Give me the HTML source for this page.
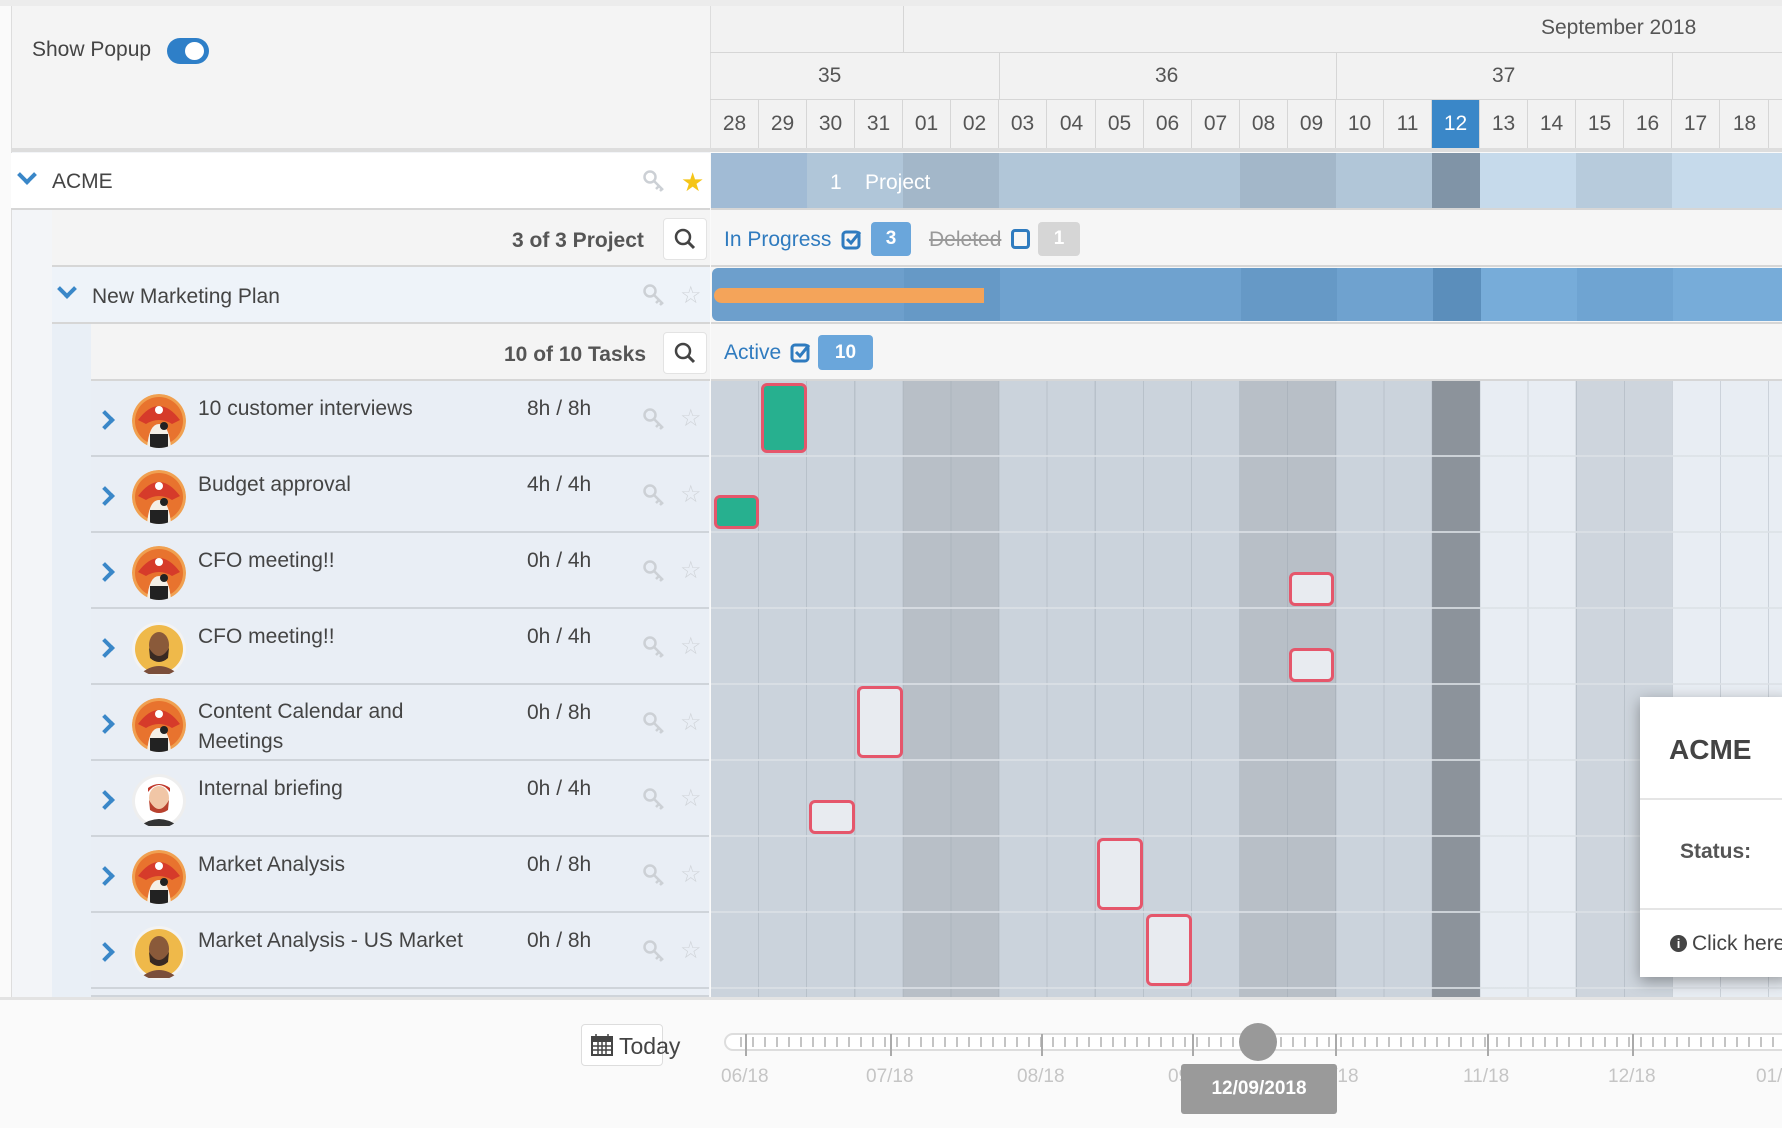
<!DOCTYPE html>
<html><head><meta charset="utf-8"><style>
*{box-sizing:border-box;margin:0;padding:0}
body{width:1782px;height:1128px;overflow:hidden;background:#fafafa;font-family:"Liberation Sans",sans-serif;color:#444;position:relative}
.a{position:absolute}
.t{font-size:21px;color:#444;white-space:nowrap}
.day{position:absolute;top:100px;height:48px;width:48px;border-right:1px solid #d6d6d6;text-align:center;line-height:48px;font-size:21px;color:#555}
.key{position:absolute;width:22px;height:22px}
.star{position:absolute;font-size:24px;color:#d0d4d9;line-height:24px}
.bar{position:absolute;border:3px solid #e5566b;border-radius:6px;background:#e8ebf0}
.av{position:absolute;width:54px;height:54px;border-radius:50%;overflow:hidden}
.chev{position:absolute;width:14px;height:14px;border-right:4px solid #3a87c8;border-bottom:4px solid #3a87c8}
.row{position:absolute;left:91px;width:618px;height:76px;background:#e9eef5;border-bottom:2px solid #cfd4da}
</style></head><body>
<!-- top strip -->
<div class="a" style="left:0;top:0;width:1782px;height:6px;background:#ececec"></div>
<!-- left header -->
<div class="a" style="left:11px;top:6px;width:699px;height:146px;background:#f4f4f4;border-left:1px solid #ddd;border-bottom:4px solid #ddd"></div>
<div class="a t" style="left:32px;top:38px">Show Popup</div>
<div class="a" style="left:167px;top:38px;width:42px;height:26px;border-radius:13px;background:#2e7fc8"></div>
<div class="a" style="left:185px;top:42px;width:19px;height:18px;border-radius:50%;background:#fff"></div>

<!-- right header -->
<div class="a" style="left:710px;top:6px;width:1072px;height:146px;background:#f2f2f2;border-left:1px solid #ddd"></div>
<div class="a" style="left:710px;top:52px;width:1072px;height:1px;background:#d6d6d6"></div>
<div class="a" style="left:710px;top:99px;width:1072px;height:1px;background:#d6d6d6"></div>
<div class="a" style="left:710px;top:148px;width:1072px;height:4px;background:#ddd"></div>
<div class="a" style="left:903px;top:6px;width:1px;height:46px;background:#d6d6d6"></div>
<div class="a t" style="left:1541px;top:16px;color:#555">September 2018</div>
<div class="a" style="left:999px;top:52px;width:1px;height:48px;background:#d6d6d6"></div>
<div class="a" style="left:1336px;top:52px;width:1px;height:48px;background:#d6d6d6"></div>
<div class="a" style="left:1672px;top:52px;width:1px;height:48px;background:#d6d6d6"></div>
<div class="a t" style="left:818px;top:64px;color:#555">35</div>
<div class="a t" style="left:1155px;top:64px;color:#555">36</div>
<div class="a t" style="left:1492px;top:64px;color:#555">37</div>
<div class="day" style="left:711px">28</div><div class="day" style="left:759px">29</div><div class="day" style="left:807px">30</div><div class="day" style="left:855px">31</div><div class="day" style="left:903px">01</div><div class="day" style="left:951px">02</div><div class="day" style="left:999px">03</div><div class="day" style="left:1048px">04</div><div class="day" style="left:1096px">05</div><div class="day" style="left:1144px">06</div><div class="day" style="left:1192px">07</div><div class="day" style="left:1240px">08</div><div class="day" style="left:1288px">09</div><div class="day" style="left:1336px">10</div><div class="day" style="left:1384px">11</div><div class="day" style="left:1432px;background:#3a87c8;color:#fff">12</div><div class="day" style="left:1480px">13</div><div class="day" style="left:1528px">14</div><div class="day" style="left:1576px">15</div><div class="day" style="left:1624px">16</div><div class="day" style="left:1672px">17</div><div class="day" style="left:1721px">18</div><div class="day" style="left:1769px">19</div>

<!-- left body -->
<div class="a" style="left:11px;top:152px;width:699px;height:845px;background:#f3f5f8;border-left:1px solid #ddd"></div>
<div class="a" style="left:52px;top:267px;width:39px;height:730px;background:#e9eff6"></div>
<!-- ACME row -->
<div class="a" style="left:11px;top:153px;width:699px;height:57px;background:#fff;border-bottom:2px solid #d6d6d6"></div>
<div class="chev" style="left:20px;top:168px;transform:rotate(45deg)"></div>
<div class="a t" style="left:52px;top:170px">ACME</div>
<div class="a" style="left:681px;top:167px;font-size:26px;color:#f5c518">★</div>
<!-- project filter row -->
<div class="a" style="left:52px;top:210px;width:658px;height:57px;background:#f4f4f4;border-bottom:2px solid #d6d6d6"></div>
<div class="a t" style="left:512px;top:229px;font-weight:bold;color:#555">3 of 3 Project</div>
<div class="a" style="left:663px;top:218px;width:44px;height:42px;background:#fff;border-radius:4px;border:1px solid #e3e3e3"></div>
<svg class="a" style="left:673px;top:227px" width="24" height="24"><circle cx="10" cy="10" r="7" fill="none" stroke="#444" stroke-width="2.5"/><line x1="15" y1="15" x2="21" y2="21" stroke="#444" stroke-width="3"/></svg>
<!-- marketing plan row -->
<div class="a" style="left:52px;top:267px;width:658px;height:57px;background:#eef3f9;border-bottom:2px solid #d6d6d6"></div>
<div class="chev" style="left:60px;top:282px;transform:rotate(45deg)"></div>
<div class="a t" style="left:92px;top:285px">New Marketing Plan</div>
<!-- tasks filter -->
<div class="a" style="left:91px;top:324px;width:619px;height:57px;background:#f4f4f4;border-bottom:2px solid #d6d6d6"></div>
<div class="a t" style="left:504px;top:343px;font-weight:bold;color:#555">10 of 10 Tasks</div>
<div class="a" style="left:663px;top:332px;width:44px;height:42px;background:#fff;border-radius:4px;border:1px solid #e3e3e3"></div>
<svg class="a" style="left:673px;top:341px" width="24" height="24"><circle cx="10" cy="10" r="7" fill="none" stroke="#444" stroke-width="2.5"/><line x1="15" y1="15" x2="21" y2="21" stroke="#444" stroke-width="3"/></svg>

<!-- task rows -->
<div class="row" style="top:381px"></div><div class="row" style="top:457px"></div><div class="row" style="top:533px"></div><div class="row" style="top:609px"></div><div class="row" style="top:685px"></div><div class="row" style="top:761px"></div><div class="row" style="top:837px"></div><div class="row" style="top:913px"></div><div class="row" style="top:989px;height:8px"></div>

<div class="a t" style="left:198px;top:397px">10 customer interviews</div><div class="a t" style="left:527px;top:397px">8h / 8h</div>
<div class="a t" style="left:198px;top:473px">Budget approval</div><div class="a t" style="left:527px;top:473px">4h / 4h</div>
<div class="a t" style="left:198px;top:549px">CFO meeting!!</div><div class="a t" style="left:527px;top:549px">0h / 4h</div>
<div class="a t" style="left:198px;top:625px">CFO meeting!!</div><div class="a t" style="left:527px;top:625px">0h / 4h</div>
<div class="a t" style="left:198px;top:701px;line-height:30px;margin-top:-4px">Content Calendar and<br>Meetings</div><div class="a t" style="left:527px;top:701px">0h / 8h</div>
<div class="a t" style="left:198px;top:777px">Internal briefing</div><div class="a t" style="left:527px;top:777px">0h / 4h</div>
<div class="a t" style="left:198px;top:853px">Market Analysis</div><div class="a t" style="left:527px;top:853px">0h / 8h</div>
<div class="a t" style="left:198px;top:929px">Market Analysis - US Market</div><div class="a t" style="left:527px;top:929px">0h / 8h</div>

<!-- chevrons right -->
<div class="chev" style="left:98px;top:413px;transform:rotate(-45deg)"></div>
<div class="chev" style="left:98px;top:489px;transform:rotate(-45deg)"></div>
<div class="chev" style="left:98px;top:565px;transform:rotate(-45deg)"></div>
<div class="chev" style="left:98px;top:641px;transform:rotate(-45deg)"></div>
<div class="chev" style="left:98px;top:717px;transform:rotate(-45deg)"></div>
<div class="chev" style="left:98px;top:793px;transform:rotate(-45deg)"></div>
<div class="chev" style="left:98px;top:869px;transform:rotate(-45deg)"></div>
<div class="chev" style="left:98px;top:945px;transform:rotate(-45deg)"></div>

<!-- avatars -->
<svg width="0" height="0" style="position:absolute"><defs>
<g id="pir"><circle cx="27" cy="27" r="27" fill="#f0a050"/><circle cx="27" cy="27" r="24" fill="#e8732e"/><path d="M6 26 Q27 -2 48 26 L40 30 Q27 22 14 30Z" fill="#d63b2a"/><circle cx="27" cy="16" r="4" fill="#fff"/><path d="M15 54 Q17 30 27 30 Q37 30 39 54Z" fill="#f4efe6"/><rect x="18" y="40" width="18" height="14" fill="#222"/><circle cx="32" cy="32" r="4" fill="#222"/></g>
<g id="man"><circle cx="27" cy="27" r="27" fill="#f3f3f3"/><circle cx="27" cy="27" r="24" fill="#efb94a"/><ellipse cx="27" cy="23" rx="10" ry="13" fill="#8a5a3a"/><path d="M17 26 Q27 42 37 26 L36 36 Q27 44 18 36Z" fill="#3a2a22"/><path d="M8 52 Q27 36 46 52Z" fill="#7b4e3a"/></g>
<g id="red"><circle cx="27" cy="27" r="27" fill="#eee"/><circle cx="27" cy="27" r="24" fill="#fff"/><ellipse cx="27" cy="24" rx="10" ry="12" fill="#f1c6a6"/><path d="M16 18 Q27 4 38 18 L38 14 Q27 6 16 14Z" fill="#c0392b"/><path d="M17 26 Q27 44 37 26 L36 36 Q27 42 18 36Z" fill="#b8412e"/><path d="M8 52 Q27 38 46 52Z" fill="#333"/></g>
</defs></svg>
<svg class="av" style="left:132px;top:394px" width="54" height="54"><use href="#pir"/></svg>
<svg class="av" style="left:132px;top:470px" width="54" height="54"><use href="#pir"/></svg>
<svg class="av" style="left:132px;top:546px" width="54" height="54"><use href="#pir"/></svg>
<svg class="av" style="left:132px;top:622px" width="54" height="54"><use href="#man"/></svg>
<svg class="av" style="left:132px;top:698px" width="54" height="54"><use href="#pir"/></svg>
<svg class="av" style="left:132px;top:774px" width="54" height="54"><use href="#red"/></svg>
<svg class="av" style="left:132px;top:850px" width="54" height="54"><use href="#pir"/></svg>
<svg class="av" style="left:132px;top:926px" width="54" height="54"><use href="#man"/></svg>

<!-- key + star icons -->
<svg width="0" height="0" style="position:absolute"><defs><g id="k"><circle cx="7" cy="7" r="5.5" fill="none" stroke="#ccd0d5" stroke-width="2.5"/><path d="M11 11 L20 20 M16 16 L13 19 M19 19 L17 21" stroke="#ccd0d5" stroke-width="2.5" fill="none"/></g></defs></svg>
<svg class="key" style="left:643px;top:170px"><use href="#k"/></svg>
<svg class="key" style="left:643px;top:284px"><use href="#k"/></svg><div class="star" style="left:680px;top:284px">☆</div>
<svg class="key" style="left:643px;top:408px"><use href="#k"/></svg><div class="star" style="left:680px;top:407px">☆</div>
<svg class="key" style="left:643px;top:484px"><use href="#k"/></svg><div class="star" style="left:680px;top:483px">☆</div>
<svg class="key" style="left:643px;top:560px"><use href="#k"/></svg><div class="star" style="left:680px;top:559px">☆</div>
<svg class="key" style="left:643px;top:636px"><use href="#k"/></svg><div class="star" style="left:680px;top:635px">☆</div>
<svg class="key" style="left:643px;top:712px"><use href="#k"/></svg><div class="star" style="left:680px;top:711px">☆</div>
<svg class="key" style="left:643px;top:788px"><use href="#k"/></svg><div class="star" style="left:680px;top:787px">☆</div>
<svg class="key" style="left:643px;top:864px"><use href="#k"/></svg><div class="star" style="left:680px;top:863px">☆</div>
<svg class="key" style="left:643px;top:940px"><use href="#k"/></svg><div class="star" style="left:680px;top:939px">☆</div>

<!-- gantt ACME row -->
<div class="a" style="left:711px;top:153px;width:1071px;height:57px;border-bottom:2px solid #d6d6d6;background:linear-gradient(to right,#a1bbd5 0 96px,#afc4d7 96px 192px,#a3b7c9 192px 288px,#b1c6d8 288px 529px,#a3b7c9 529px 625px,#b1c6d8 625px 721px,#8094a7 721px 769px,#c6daeb 769px 865px,#b7cbdc 865px 961px,#c6daeb 961px)"></div>
<div class="a" style="left:807px;top:153px;width:96px;height:55px;background:#b0c6d9;border-radius:4px 0 0 4px"></div>
<div class="a t" style="left:830px;top:171px;color:#fff">1</div>
<div class="a t" style="left:865px;top:171px;color:#fff">Project</div>
<!-- status filter row -->
<div class="a" style="left:711px;top:210px;width:1071px;height:57px;background:#f6f6f6;border-bottom:2px solid #d6d6d6"></div>
<div class="a t" style="left:724px;top:228px;color:#2f7bbf">In Progress</div>
<svg class="a" style="left:841px;top:229px" width="22" height="22"><rect x="2" y="3" width="16" height="16" rx="3" fill="none" stroke="#2f7bbf" stroke-width="3"/><path d="M6 10 L10 14 L19 3" stroke="#2f7bbf" stroke-width="3" fill="none"/></svg>
<div class="a" style="left:871px;top:222px;width:40px;height:34px;background:#6aa6db;border-radius:4px;color:#fff;font-weight:bold;font-size:19px;text-align:center;line-height:34px">3</div>
<div class="a t" style="left:929px;top:228px;color:#999;text-decoration:line-through">Deleted</div>
<div class="a" style="left:1011px;top:229px;width:19px;height:20px;border:3px solid #2f7bbf;border-radius:4px"></div>
<div class="a" style="left:1038px;top:222px;width:42px;height:34px;background:#d6d6d6;border-radius:4px;color:#fff;font-weight:bold;font-size:19px;text-align:center;line-height:34px">1</div>
<!-- marketing gantt row -->
<div class="a" style="left:711px;top:267px;width:1071px;height:57px;background:#f6f6f6;border-bottom:2px solid #d6d6d6"></div>
<div class="a" style="left:712px;top:268px;width:1070px;height:53px;border-radius:6px 0 0 6px;background:linear-gradient(to right,#6d9fcc 0 192px,#6699c6 192px 288px,#6fa2cf 288px 529px,#6699c6 529px 625px,#6fa2cf 625px 721px,#5b8ebb 721px 769px,#77acd9 769px 865px,#6fa4d2 865px 961px,#77acd9 961px)"></div>
<div class="a" style="left:714px;top:288px;width:270px;height:15px;border-radius:8px 0 0 8px;background:#f4a45a"></div>
<!-- active filter row -->
<div class="a" style="left:711px;top:324px;width:1071px;height:57px;background:#f6f6f6;border-bottom:2px solid #d6d6d6"></div>
<div class="a t" style="left:724px;top:341px;color:#2f7bbf">Active</div>
<svg class="a" style="left:790px;top:342px" width="22" height="22"><rect x="2" y="3" width="16" height="16" rx="3" fill="none" stroke="#2f7bbf" stroke-width="3"/><path d="M6 10 L10 14 L19 3" stroke="#2f7bbf" stroke-width="3" fill="none"/></svg>
<div class="a" style="left:818px;top:335px;width:55px;height:35px;background:#6aa6db;border-radius:4px;color:#fff;font-weight:bold;font-size:19px;text-align:center;line-height:35px">10</div>
<!-- task grid -->
<div class="a" style="left:711px;top:381px;width:1071px;height:616px;background:linear-gradient(to right,#cbd3dc 0 192px,#b8bfc7 192px 288px,#cbd3dc 288px 529px,#b8bfc7 529px 625px,#cbd3dc 625px 721px,#8c939b 721px 769px,#e8edf3 769px 865px,#ced5dd 865px 961px,#e8edf3 961px)"></div>
<div class="a" style="left:711px;top:381px;width:1071px;height:616px;background:repeating-linear-gradient(to right,transparent 0 47px,rgba(150,160,170,.35) 47px 48.1px)"></div>
<div class="a" style="left:711px;top:381px;width:1071px;height:616px;background:repeating-linear-gradient(to bottom,transparent 0 74px,rgba(220,225,230,.8) 74px 76px)"></div>

<!-- bars -->
<div class="bar" style="left:761px;top:383px;width:46px;height:70px;background:#27b08f"></div>
<div class="bar" style="left:714px;top:495px;width:45px;height:34px;background:#27b08f"></div>
<div class="bar" style="left:1289px;top:572px;width:45px;height:34px"></div>
<div class="bar" style="left:1289px;top:648px;width:45px;height:34px"></div>
<div class="bar" style="left:857px;top:686px;width:46px;height:72px"></div>
<div class="bar" style="left:809px;top:800px;width:46px;height:34px"></div>
<div class="bar" style="left:1097px;top:838px;width:46px;height:72px"></div>
<div class="bar" style="left:1146px;top:914px;width:46px;height:72px"></div>

<!-- popup -->
<div class="a" style="left:1640px;top:697px;width:150px;height:280px;background:#fff;box-shadow:0 4px 14px rgba(0,0,0,.35)"></div>
<div class="a" style="left:1640px;top:798px;width:142px;height:2px;background:#e5e5e5"></div>
<div class="a" style="left:1640px;top:908px;width:142px;height:2px;background:#e5e5e5"></div>
<div class="a" style="left:1669px;top:734px;font-size:28px;font-weight:bold;color:#444">ACME</div>
<div class="a t" style="left:1680px;top:840px;font-weight:bold;color:#555">Status:</div>
<div class="a" style="left:1670px;top:935px;width:17px;height:17px;border-radius:50%;background:#444;color:#fff;font-size:13px;font-weight:bold;text-align:center;line-height:17px">i</div>
<div class="a t" style="left:1692px;top:932px;color:#444">Click here</div>

<!-- bottom -->
<div class="a" style="left:0;top:997px;width:1782px;height:3px;background:#e3e3e3"></div>
<div class="a" style="left:581px;top:1024px;width:82px;height:42px;background:#fff;border:1px solid #ddd;border-radius:4px"></div>
<svg class="a" style="left:591px;top:1033px" width="22" height="24"><rect x="1" y="4" width="20" height="18" fill="none" stroke="#444" stroke-width="2"/><rect x="1" y="4" width="20" height="5" fill="#444"/><path d="M5 1v6M17 1v6M1 13h20M1 17h20M7 9v13M11 9v13M15 9v13" stroke="#444" stroke-width="1.5"/></svg>
<div class="a t" style="left:619px;top:1033px;font-size:23px">Today</div>
<div class="a" style="left:724px;top:1033px;width:1070px;height:18px;border:2px solid #ddd;border-radius:9px;background:#fff"></div>
<div class="a" style="left:740px;top:1037px;width:1050px;height:10px;background:repeating-linear-gradient(to right,#c4c4c4 0 2px,transparent 2px 12px)"></div>
<div class="a" style="left:745px;top:1034px;width:2px;height:22px;background:#aaa"></div>
<div class="a" style="left:890px;top:1034px;width:2px;height:22px;background:#aaa"></div>
<div class="a" style="left:1041px;top:1034px;width:2px;height:22px;background:#aaa"></div>
<div class="a" style="left:1192px;top:1034px;width:2px;height:22px;background:#aaa"></div>
<div class="a" style="left:1335px;top:1034px;width:2px;height:22px;background:#aaa"></div>
<div class="a" style="left:1487px;top:1034px;width:2px;height:22px;background:#aaa"></div>
<div class="a" style="left:1632px;top:1034px;width:2px;height:22px;background:#aaa"></div>
<div class="a" style="left:1239px;top:1023px;width:38px;height:38px;border-radius:50%;background:#999"></div>
<div class="a" style="left:721px;top:1066px;font-size:19px;color:#c5c5c5">06/18</div>
<div class="a" style="left:866px;top:1066px;font-size:19px;color:#c5c5c5">07/18</div>
<div class="a" style="left:1017px;top:1066px;font-size:19px;color:#c5c5c5">08/18</div>
<div class="a" style="left:1168px;top:1066px;font-size:19px;color:#c5c5c5">09/18</div>
<div class="a" style="left:1311px;top:1066px;font-size:19px;color:#c5c5c5">10/18</div>
<div class="a" style="left:1463px;top:1066px;font-size:19px;color:#c5c5c5">11/18</div>
<div class="a" style="left:1608px;top:1066px;font-size:19px;color:#c5c5c5">12/18</div>
<div class="a" style="left:1756px;top:1066px;font-size:19px;color:#c5c5c5">01/19</div>
<div class="a" style="left:1181px;top:1064px;width:156px;height:50px;background:#9a9a9a;border-radius:3px;color:#fff;font-size:19px;font-weight:bold;text-align:center;line-height:50px">12/09/2018</div>
</body></html>
